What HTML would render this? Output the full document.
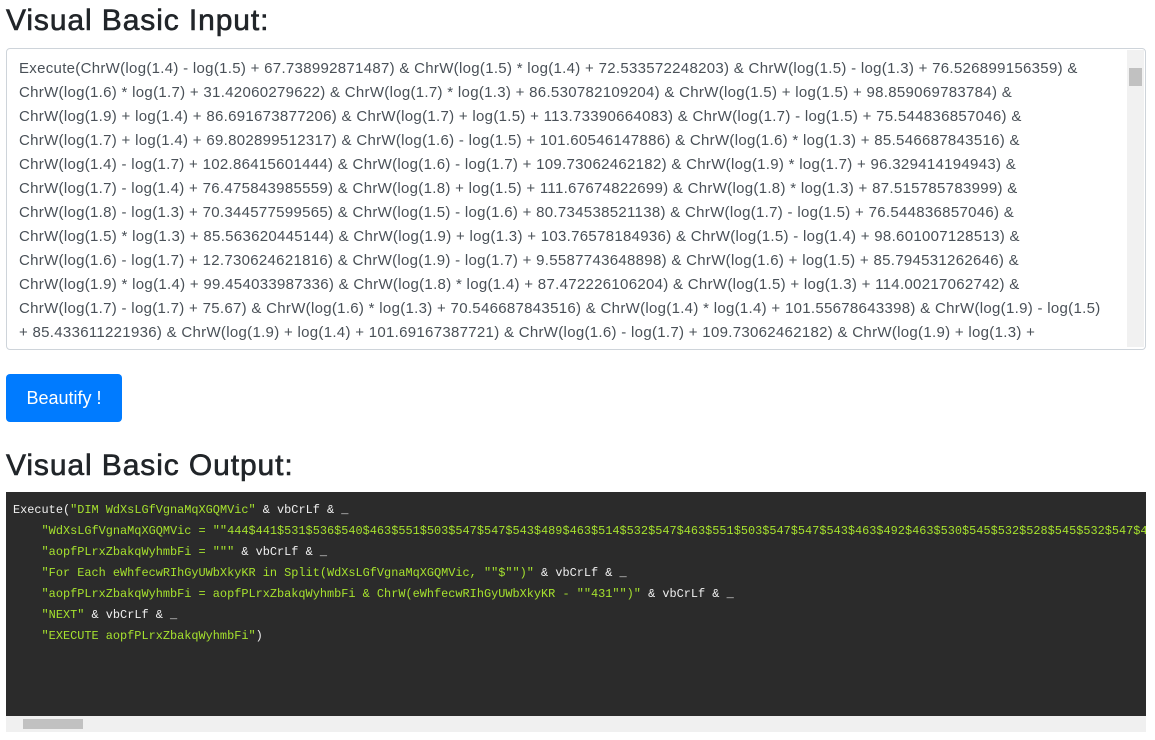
<!DOCTYPE html>
<html><head><style>
body{margin:0;background:#fff;font-family:"Liberation Sans",sans-serif;color:#212529;width:1155px;height:740px;overflow:hidden;position:relative}
h2{position:absolute;left:6px;margin:0;font-size:30px;font-weight:normal;letter-spacing:0.9px;-webkit-text-stroke:0.6px #212529}
.ta{position:absolute;left:6px;top:48px;width:1138px;height:300px;border:1px solid #ced4da;border-radius:4px;overflow:hidden}
.ta .t{position:absolute;left:12px;top:8px;font-size:15px;line-height:24px;color:#495057;white-space:nowrap;letter-spacing:0.3px}
.vs{position:absolute;right:1px;top:1px;width:17px;height:297px;background:#f1f1f1}
.vs .th{position:absolute;left:2px;top:18px;width:13px;height:18px;background:#c1c1c1}
.btn{position:absolute;left:6px;top:374px;width:116px;height:48px;background:#007bff;border-radius:4px;color:#fff;font-size:18px;line-height:48px;text-align:center}
.code{position:absolute;left:6px;top:492px;width:1140px;height:240px;background:#2b2b2b;overflow:hidden}
.code pre{margin:0;position:absolute;left:7px;top:8px;font-family:"Liberation Mono",monospace;font-size:11.9px;line-height:21px;color:#f0f0f0}
.s{color:#a6e22e}
.hs{position:absolute;left:0;bottom:0;width:1140px;height:16px;background:#f0f0f0}
.hs .th{position:absolute;left:17px;top:3px;width:60px;height:10px;background:#c1c1c1}
</style></head><body>
<h2 style="top:4px">Visual Basic Input:</h2>
<div class="ta"><div class="t">Execute(ChrW(log(1.4) - log(1.5) + 67.738992871487) &amp; ChrW(log(1.5) * log(1.4) + 72.533572248203) &amp; ChrW(log(1.5) - log(1.3) + 76.526899156359) &amp;<br>ChrW(log(1.6) * log(1.7) + 31.42060279622) &amp; ChrW(log(1.7) * log(1.3) + 86.530782109204) &amp; ChrW(log(1.5) + log(1.5) + 98.859069783784) &amp;<br>ChrW(log(1.9) + log(1.4) + 86.691673877206) &amp; ChrW(log(1.7) + log(1.5) + 113.73390664083) &amp; ChrW(log(1.7) - log(1.5) + 75.544836857046) &amp;<br>ChrW(log(1.7) + log(1.4) + 69.802899512317) &amp; ChrW(log(1.6) - log(1.5) + 101.60546147886) &amp; ChrW(log(1.6) * log(1.3) + 85.546687843516) &amp;<br>ChrW(log(1.4) - log(1.7) + 102.86415601444) &amp; ChrW(log(1.6) - log(1.7) + 109.73062462182) &amp; ChrW(log(1.9) * log(1.7) + 96.329414194943) &amp;<br>ChrW(log(1.7) - log(1.4) + 76.475843985559) &amp; ChrW(log(1.8) + log(1.5) + 111.67674822699) &amp; ChrW(log(1.8) * log(1.3) + 87.515785783999) &amp;<br>ChrW(log(1.8) - log(1.3) + 70.344577599565) &amp; ChrW(log(1.5) - log(1.6) + 80.734538521138) &amp; ChrW(log(1.7) - log(1.5) + 76.544836857046) &amp;<br>ChrW(log(1.5) * log(1.3) + 85.563620445144) &amp; ChrW(log(1.9) + log(1.3) + 103.76578184936) &amp; ChrW(log(1.5) - log(1.4) + 98.601007128513) &amp;<br>ChrW(log(1.6) - log(1.7) + 12.730624621816) &amp; ChrW(log(1.9) - log(1.7) + 9.5587743648898) &amp; ChrW(log(1.6) + log(1.5) + 85.794531262646) &amp;<br>ChrW(log(1.9) * log(1.4) + 99.454033987336) &amp; ChrW(log(1.8) * log(1.4) + 87.472226106204) &amp; ChrW(log(1.5) + log(1.3) + 114.00217062742) &amp;<br>ChrW(log(1.7) - log(1.7) + 75.67) &amp; ChrW(log(1.6) * log(1.3) + 70.546687843516) &amp; ChrW(log(1.4) * log(1.4) + 101.55678643398) &amp; ChrW(log(1.9) - log(1.5)<br>+ 85.433611221936) &amp; ChrW(log(1.9) + log(1.4) + 101.69167387721) &amp; ChrW(log(1.6) - log(1.7) + 109.73062462182) &amp; ChrW(log(1.9) + log(1.3) +</div>
<div class="vs"><div class="th"></div></div></div>
<div class="btn">Beautify !</div>
<h2 style="top:449px">Visual Basic Output:</h2>
<div class="code"><pre>Execute(<span class="s">"DIM WdXsLGfVgnaMqXGQMVic"</span> &amp; vbCrLf &amp; _
    <span class="s">"WdXsLGfVgnaMqXGQMVic = ""444$441$531$536$540$463$551$503$547$547$543$489$463$514$532$547$463$551$503$547$547$543$463$492$463$530$545$532$528$545$532$547$463$489$463$514$532$547"</span>
    <span class="s">"aopfPLrxZbakqWyhmbFi = """</span> &amp; vbCrLf &amp; _
    <span class="s">"For Each eWhfecwRIhGyUWbXkyKR in Split(WdXsLGfVgnaMqXGQMVic, ""$"")"</span> &amp; vbCrLf &amp; _
    <span class="s">"aopfPLrxZbakqWyhmbFi = aopfPLrxZbakqWyhmbFi &amp; ChrW(eWhfecwRIhGyUWbXkyKR - ""431"")"</span> &amp; vbCrLf &amp; _
    <span class="s">"NEXT"</span> &amp; vbCrLf &amp; _
    <span class="s">"EXECUTE aopfPLrxZbakqWyhmbFi"</span>)</pre>
<div class="hs"><div class="th"></div></div></div>
</body></html>
